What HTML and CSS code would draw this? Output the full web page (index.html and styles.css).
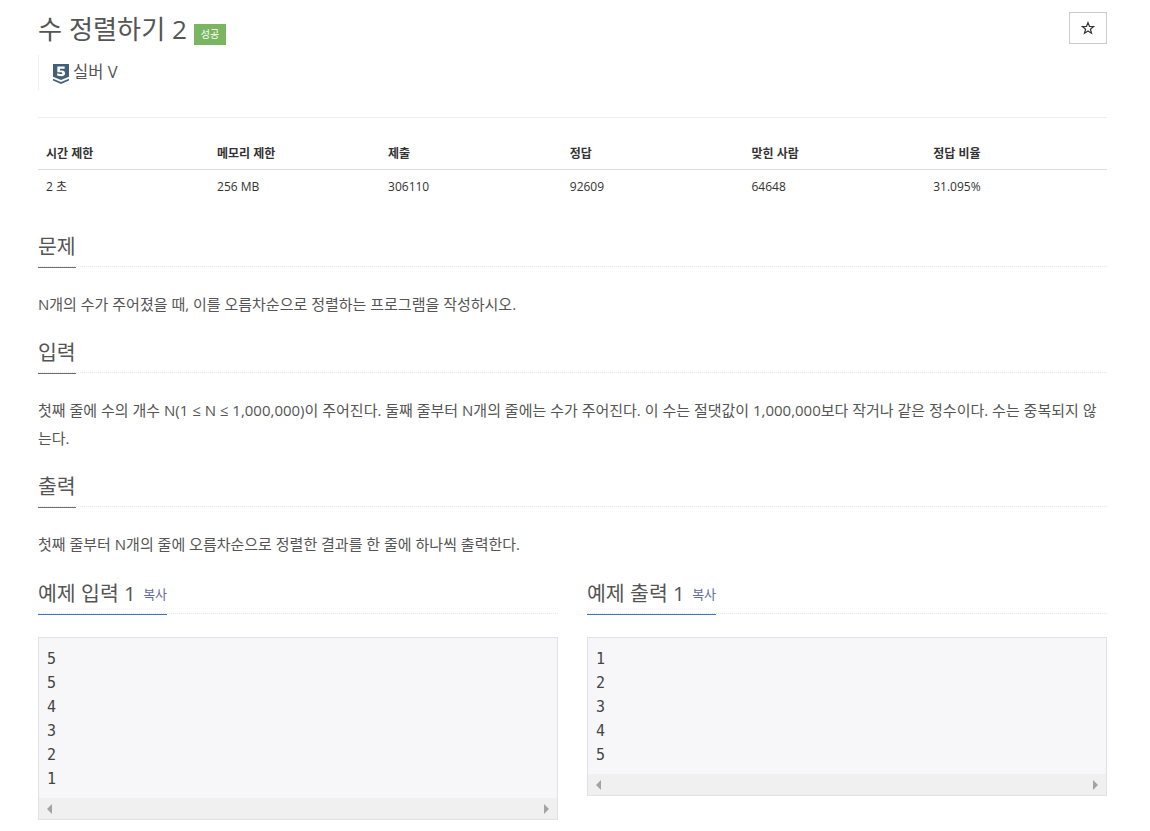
FILE: index.html
```html
<!DOCTYPE html>
<html lang="ko">
<head>
<meta charset="utf-8">
<title>수 정렬하기 2</title>
<link rel="stylesheet" href="styles.css">
</head>
<body>
<main class="page">
  <header class="title-row">
    <div class="title-text">
      <h1 class="title">수 정렬하기 2</h1>
      <span class="badge">성공</span>
    </div>
    <button class="star-btn" type="button" aria-label="즐겨찾기">
      <svg viewBox="0 0 14 14" width="14" height="14" aria-hidden="true"><path d="M7 1.6L8.5 5.4L12.6 5.6L9.4 8.2L10.5 12.2L7 9.9L3.5 12.2L4.6 8.2L1.4 5.6L5.5 5.4Z" fill="none" stroke="#333" stroke-width="1.2"/></svg>
    </button>
  </header>
  <div class="tier">
    <svg class="tier-icon" viewBox="0 0 17 21" width="16" height="20" aria-hidden="true">
      <path d="M0 0H17V13.5L8.5 17L0 13.5Z" fill="#435f7a"/>
      <path d="M0 15.5L8.5 19L17 15.5V17.5L8.5 21L0 17.5Z" fill="#435f7a"/>
      <path d="M4.6 2.6H12.4V5H7.4V6.7H9.6C11.6 6.7 12.8 7.9 12.8 9.6C12.8 11.6 11.3 12.8 8.8 12.8C7.2 12.8 5.6 12.5 4.4 12V9.8C5.6 10.3 7.1 10.6 8.2 10.6C9.3 10.6 9.8 10.2 9.8 9.6C9.8 9 9.3 8.7 8.2 8.7H4.6Z" fill="#fff"/>
    </svg>
    <span class="tier-name">실버 V</span>
  </div>
  <hr class="rule">
  <table class="info">
    <thead>
      <tr>
        <th class="w16">시간 제한</th>
        <th class="w16">메모리 제한</th>
        <th class="w17">제출</th>
        <th class="w17">정답</th>
        <th class="w17">맞힌 사람</th>
        <th class="w17">정답 비율</th>
      </tr>
    </thead>
    <tbody>
      <tr>
        <td>2 초</td>
        <td>256 MB</td>
        <td>306110</td>
        <td>92609</td>
        <td>64648</td>
        <td>31.095%</td>
      </tr>
    </tbody>
  </table>
  <section class="section section-first">
    <div class="headline"><h2>문제</h2></div>
    <p class="text">N개의 수가 주어졌을 때, 이를 오름차순으로 정렬하는 프로그램을 작성하시오.</p>
  </section>
  <section class="section">
    <div class="headline"><h2>입력</h2></div>
    <p class="text">첫째 줄에 수의 개수 N(1 ≤ N ≤ 1,000,000)이 주어진다. 둘째 줄부터 N개의 줄에는 수가 주어진다. 이 수는 절댓값이 1,000,000보다 작거나 같은 정수이다. 수는 중복되지 않는다.</p>
  </section>
  <section class="section">
    <div class="headline"><h2>출력</h2></div>
    <p class="text">첫째 줄부터 N개의 줄에 오름차순으로 정렬한 결과를 한 줄에 하나씩 출력한다.</p>
  </section>
  <div class="samples">
    <section class="sample">
      <div class="headline headline-blue"><h2>예제 입력 1 <a class="copy">복사</a></h2></div>
      <div class="code-box">
        <pre class="code">5
5
4
3
2
1</pre>
        <div class="scrollbar"><span class="arrow-left"></span><span class="arrow-right"></span></div>
      </div>
    </section>
    <section class="sample">
      <div class="headline headline-blue"><h2>예제 출력 1 <a class="copy">복사</a></h2></div>
      <div class="code-box">
        <pre class="code">1
2
3
4
5</pre>
        <div class="scrollbar"><span class="arrow-left"></span><span class="arrow-right"></span></div>
      </div>
    </section>
  </div>
</main>
</body>
</html>
```
FILE: styles.css
```css
* { box-sizing: border-box; }
html, body { margin: 0; padding: 0; background: #fff; }
body {
  font-family: "Open Sans", "Noto Sans CJK KR", sans-serif;
  font-size: 13px;
  color: #333;
  height: 831px;
  overflow: hidden;
}
.page { padding: 12px 43px 0 38px; }
.title-row { display: flex; justify-content: space-between; align-items: flex-start; height: 43px; }
.title-text { display: flex; align-items: flex-start; }
.title {
  margin: 0;
  font-size: 26.2px;
  font-weight: 400;
  line-height: 34px;
  color: #555;
}
.badge {
  margin: 12px 0 0 7px;
  width: 32px;
  height: 21px;
  background: #7ab661;
  color: #fff;
  font-size: 10px;
  font-weight: 400;
  line-height: 21px;
  text-align: center;
}
.star-btn {
  display: flex;
  align-items: center;
  justify-content: center;
  width: 38px;
  height: 32px;
  padding: 0;
  background: #fff;
  border: 1px solid #ccc;
}
.tier {
  display: flex;
  align-items: center;
  height: 35px;
  padding: 0 0 0 14px;
  border-left: 1px solid #eee;
  font-size: 16.5px;
  color: #555;
}
.tier-icon { margin: 3px 4px 0 0; }
.tier-name { position: relative; top: -2px; }
.rule { margin: 27px 0 0; border: 0; border-top: 1px solid #eee; }
.info { width: 100%; margin-top: 19px; border-collapse: collapse; table-layout: fixed; font-size: 12px; }
.w16 { width: 16%; }
.w17 { width: 17%; }
.info th {
  height: 32px;
  padding: 0 8px;
  text-align: left;
  font-weight: 700;
  color: #333;
  border-bottom: 1px solid #ddd;
}
.info td { height: 34px; padding: 0 8px; color: #333; }
.section { margin-top: 21px; }
.section-first { margin-top: 30px; }
.headline { border-bottom: 1px dotted #e7e7e7; height: 34px; }
.headline h2 {
  display: inline-block;
  margin: 0;
  height: 35px;
  font-size: 20.5px;
  font-weight: 400;
  line-height: 26px;
  color: #555;
  border-bottom: 1px solid #6e6e6e;
}
.headline-blue h2 { border-bottom: 1px solid #3d77c9; }
.text { margin: 23px 0 0; font-size: 15px; line-height: 28px; color: #555; }
.samples { display: grid; grid-template-columns: 520px 520px; column-gap: 29px; margin-top: 22px; }
.copy { position: relative; top: -2px; font-size: 13px; color: #5f6c9c; margin-left: 2px; }
.code-box { margin-top: 23px; border: 1px solid #e1e1e8; background: #f7f7f9; }
.code {
  margin: 0;
  padding: 9px 8px 7px;
  font-family: "DejaVu Sans Mono", monospace;
  font-size: 15px;
  line-height: 24px;
  color: #444;
}
.scrollbar {
  display: flex;
  justify-content: space-between;
  align-items: center;
  height: 21px;
  padding: 0 8px;
  background: #f0f0f0;
}
.arrow-left { border: 5px solid transparent; border-left-width: 0; border-right: 5px solid #a3a3a3; }
.arrow-right { border: 5px solid transparent; border-right-width: 0; border-left: 5px solid #a3a3a3; }
```
